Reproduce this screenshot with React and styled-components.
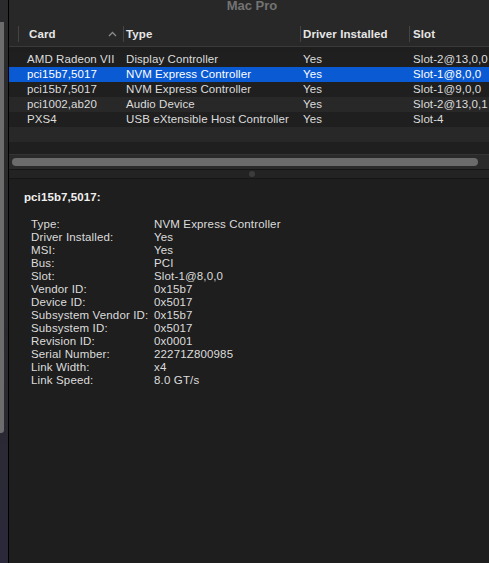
import React from "react";
import styled, { createGlobalStyle } from "styled-components";

const Global = createGlobalStyle`
  html, body { margin: 0; padding: 0; background: #1e1e1e; }
  body { font-family: "Liberation Sans", Arial, sans-serif; -webkit-font-smoothing: antialiased; }
  * { box-sizing: border-box; }
`;

const Page = styled.div`
  display: flex;
  width: 489px;
  height: 563px;
  overflow: hidden;
`;

const SideStrip = styled.div`
  width: 8px;
  flex: none;
  padding-top: 22px;
  background: linear-gradient(180deg, #2b2b2d 0%, #2a2a2e 60%, #2a283a 100%);
`;

const SideThumb = styled.div`
  width: 4px;
  height: 411px;
  background: #6c6c6c;
  border-radius: 0 0 3px 0;
`;

const Edge = styled.div`
  width: 1px;
  flex: none;
  background: #000;
`;

const Window = styled.div`
  flex: 1;
  display: flex;
  flex-direction: column;
  background: #1e1e1e;
  min-width: 0;
`;

const TitleBar = styled.div`
  height: 22px;
  background: #282828;
  display: flex;
  justify-content: center;
  align-items: flex-start;
  overflow: hidden;
`;

const Title = styled.div`
  font-size: 13px;
  font-weight: bold;
  color: #737373;
  line-height: 12px;
  margin-top: 0px;
  padding-left: 6px;
`;

const cols = "105px 177px 109px 1fr";

const HeaderRow = styled.div`
  display: grid;
  grid-template-columns: ${cols};
  padding-left: 9px;
  height: 25px;
  background: #282828;
  border-bottom: 1px solid #3a3a3a;
  align-items: center;
`;

const HeaderCell = styled.div`
  height: 16px;
  border-left: 1px solid #444;
  padding-left: ${(p) => p.$pad}px;
  display: flex;
  align-items: center;
  font-size: 11.5px;
  letter-spacing: 0.1px;
  font-weight: bold;
  color: #e6e6e6;
  position: relative;
  white-space: nowrap;
`;

const SortCaret = styled.svg`
  position: absolute;
  right: 6px;
  top: 5px;
`;

const Body = styled.div`
  padding-top: 5px;
  border-bottom: 1px solid #343434;
`;

const Row = styled.div`
  display: grid;
  grid-template-columns: ${cols};
  padding-left: 9px;
  height: ${(p) => p.$h || 15}px;
  background: ${(p) => (p.$selected ? "#0a5ad4" : p.$alt ? "#282828" : "#1f1f1f")};
  align-items: center;
`;

const Cell = styled.div`
  padding-left: ${(p) => p.$pad}px;
  font-size: 11.5px;
  letter-spacing: 0.08px;
  color: ${(p) => (p.$selected ? "#ffffff" : "#dcdcdc")};
  white-space: nowrap;
  overflow: hidden;
  line-height: 15px;
`;

const ScrollTrack = styled.div`
  height: 14px;
  background: #2a2a2a;
  padding: 3px 11px 0 3px;
`;

const ScrollThumb = styled.div`
  height: 8px;
  border-radius: 4px;
  background: #6b6b6b;
`;

const Splitter = styled.div`
  height: 10px;
  border-top: 1px solid #161616;
  border-bottom: 1px solid #161616;
  background: #232323;
  display: flex;
  align-items: center;
  justify-content: center;
`;

const Dot = styled.div`
  width: 6px;
  height: 6px;
  border-radius: 50%;
  background: #3c3c3c;
  margin-left: 6px;
`;

const Detail = styled.div`
  flex: 1;
  background: #1e1e1e;
  padding: 11px 0 0 15px;
`;

const DetailTitle = styled.div`
  font-size: 11.5px;
  letter-spacing: 0.1px;
  font-weight: bold;
  color: #f0f0f0;
  line-height: 14px;
  margin-bottom: 14px;
`;

const PropList = styled.div`
  display: grid;
  grid-template-columns: 123px 1fr;
  padding-left: 7px;
`;

const PropLabel = styled.div`
  font-size: 11.5px;
  letter-spacing: 0.15px;
  color: #dcdcdc;
  line-height: 13px;
  white-space: nowrap;
`;

const PropValue = styled(PropLabel)``;

const rows = [
  ["AMD Radeon VII", "Display Controller", "Yes", "Slot-2@13,0,0"],
  ["pci15b7,5017", "NVM Express Controller", "Yes", "Slot-1@8,0,0"],
  ["pci15b7,5017", "NVM Express Controller", "Yes", "Slot-1@9,0,0"],
  ["pci1002,ab20", "Audio Device", "Yes", "Slot-2@13,0,1"],
  ["PXS4", "USB eXtensible Host Controller", "Yes", "Slot-4"],
];

const pads = [9, 3, 3, 4];

const props = [
  ["Type:", "NVM Express Controller"],
  ["Driver Installed:", "Yes"],
  ["MSI:", "Yes"],
  ["Bus:", "PCI"],
  ["Slot:", "Slot-1@8,0,0"],
  ["Vendor ID:", "0x15b7"],
  ["Device ID:", "0x5017"],
  ["Subsystem Vendor ID:", "0x15b7"],
  ["Subsystem ID:", "0x5017"],
  ["Revision ID:", "0x0001"],
  ["Serial Number:", "22271Z800985"],
  ["Link Width:", "x4"],
  ["Link Speed:", "8.0 GT/s"],
];

export default function App() {
  return (
    <Page>
      <Global />
      <SideStrip>
        <SideThumb />
      </SideStrip>
      <Edge />
      <Window>
        <TitleBar>
          <Title>Mac Pro</Title>
        </TitleBar>
        <HeaderRow>
          <HeaderCell $pad={10}>
            Card
            <SortCaret width="9" height="6" viewBox="0 0 9 6">
              <path d="M1 5 L4.5 1.5 L8 5" fill="none" stroke="#8a8a8a" strokeWidth="1.3" />
            </SortCaret>
          </HeaderCell>
          <HeaderCell $pad={2}>Type</HeaderCell>
          <HeaderCell $pad={2}>Driver Installed</HeaderCell>
          <HeaderCell $pad={3}>Slot</HeaderCell>
        </HeaderRow>
        <Body>
          {rows.map((r, i) => (
            <Row key={i} $alt={i % 2 === 1} $selected={i === 1}>
              {r.map((c, j) => (
                <Cell key={j} $pad={pads[j]} $selected={i === 1}>
                  {c}
                </Cell>
              ))}
            </Row>
          ))}
          <Row $alt />
          <Row $h={12} />
        </Body>
        <ScrollTrack>
          <ScrollThumb />
        </ScrollTrack>
        <Splitter>
          <Dot />
        </Splitter>
        <Detail>
          <DetailTitle>pci15b7,5017:</DetailTitle>
          <PropList>
            {props.map(([k, v]) => (
              <React.Fragment key={k}>
                <PropLabel>{k}</PropLabel>
                <PropValue>{v}</PropValue>
              </React.Fragment>
            ))}
          </PropList>
        </Detail>
      </Window>
    </Page>
  );
}
